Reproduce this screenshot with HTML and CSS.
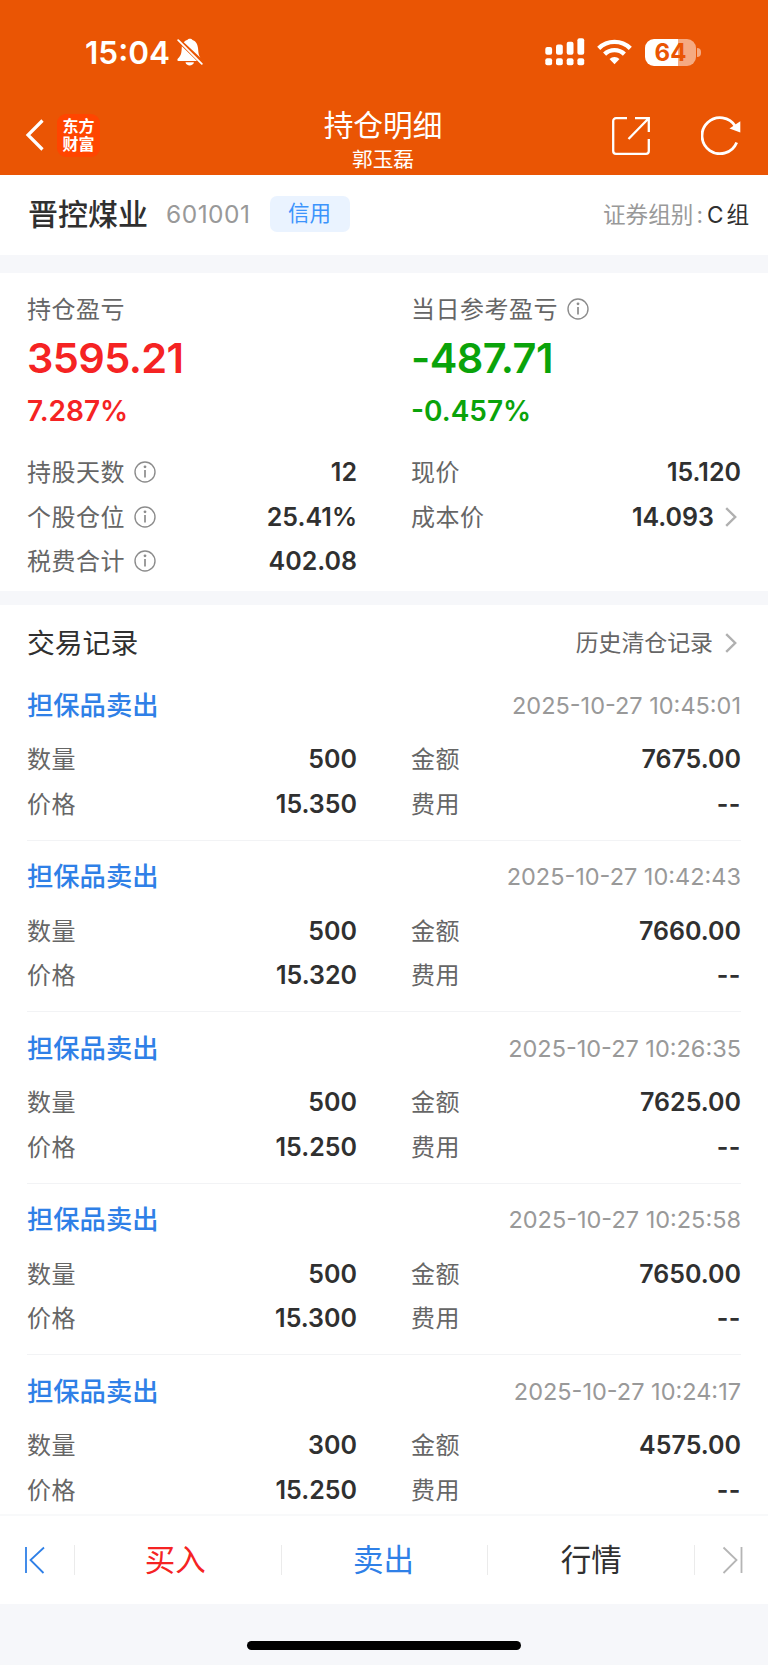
FILE: index.html
```html
<!DOCTYPE html>
<html lang="zh-CN">
<head>
  <meta charset="utf-8">
  <title>持仓明细</title>
  <link rel="stylesheet" href="styles.css">
</head>
<body>
<svg class="defs" width="0" height="0">
  <symbol id="info" viewBox="0 0 22 22">
    <circle cx="11" cy="11" r="10" fill="none" stroke="#8c8c8c" stroke-width="1.4"/>
    <path d="M11 9v7.5" stroke="#8c8c8c" stroke-width="1.7"/>
    <circle cx="11" cy="5.8" r="1.4" fill="#8c8c8c"/>
  </symbol>
  <symbol id="arrow" viewBox="0 0 12 20">
    <path d="M1.2 1.2l9 8.8-9 8.8" fill="none" stroke="#b0b0b0" stroke-width="2.4"/>
  </symbol>
</svg>

<header class="header">
  <div class="status-bar">
    <span class="time">15:04</span>
    <svg class="bell" width="26" height="28" viewBox="0 0 26 28" fill="#fff">
      <path d="M6.8 4.2L24 20.300c-2.700-2.900-2.500-6-3-10.300C20.500 5.800 18.500 2.800 15.500 2 14.600.4 11.200.4 10.300 2 9 2.400 7.700 3.100 6.800 4.200z"/>
      <path d="M4.800 8.300L20 22.900H1.500c-1.500 0-1.400-1.900-.3-2.700 3-2.600 3.400-5.500 3.600-11.900z"/>
      <path d="M8.500 24.300h8.400c-.5 4.200-7.900 4.200-8.400 0z"/>
      <path d="M1.200 2.200l23.600 23.600" stroke="#fff" stroke-width="1.800" stroke-linecap="round"/>
    </svg>
    <svg class="signal" width="40" height="28" viewBox="0 0 40 28" fill="#fff">
      <rect x="0.300" y="9" width="6.800" height="7.800" rx="2"/>
      <rect x="11" y="6.500" width="6.800" height="10.300" rx="2"/>
      <rect x="21.700" y="3.700" width="6.800" height="13.100" rx="2"/>
      <rect x="32.400" y="0.300" width="6.800" height="16.500" rx="2"/>
      <rect x="0.300" y="20.300" width="6.800" height="7" rx="2"/>
      <rect x="11" y="20.300" width="6.800" height="7" rx="2"/>
      <rect x="21.700" y="20.300" width="6.800" height="7" rx="2"/>
      <rect x="32.400" y="20.300" width="6.800" height="7" rx="2"/>
    </svg>
    <svg class="wifi" width="35" height="26" viewBox="0 0 35 26" fill="none" stroke="#fff" stroke-width="4.400">
      <path d="M1.700 9.300a22.700 22.700 0 0 1 31.600 0"/>
      <path d="M7.600 15.100a14.300 14.300 0 0 1 19.800 0"/>
      <path d="M17.500 25.300l-5-5.200a7.300 7.300 0 0 1 10 0z" fill="#fff" stroke="none"/>
    </svg>
    <span class="battery">64</span><i class="battery-cap"></i>
  </div>
  <nav class="nav">
    <div class="nav-left">
      <svg width="19" height="32" viewBox="0 0 19 32"><path d="M17.500 1.500L3 16l14.500 14.500" fill="none" stroke="#fff" stroke-width="3.200"/></svg>
      <span class="logo">东方<br>财富</span>
    </div>
    <div class="nav-title">
      <h1>持仓明细</h1>
      <p>郭玉磊</p>
    </div>
    <div class="nav-right">
      <svg width="38" height="38" viewBox="0 0 38 38" fill="none" stroke="#fff" stroke-width="2.300">
        <path d="M15 1.200H4a2.800 2.800 0 0 0-2.800 2.800v30A2.800 2.800 0 0 0 4 36.800h30a2.800 2.800 0 0 0 2.800-2.800V22"/>
        <path d="M23 1.200h13.800V15M36.500 1.500L16.500 22"/>
      </svg>
      <svg width="40" height="39" viewBox="0 0 40 39">
        <path d="M35.700 26.500A18 18 0 1 1 34.500 10.500" fill="none" stroke="#fff" stroke-width="2.800"/>
        <path d="M39.300 5.300v11.200l-10.800-4z" fill="#fff"/>
      </svg>
    </div>
  </nav>
</header>

<section class="stock">
  <span class="stock-name">晋控煤业</span>
  <span class="stock-code">601001</span>
  <span class="tag">信用</span>
  <span class="group">证券组别<i>:</i><b>C</b><b>组</b></span>
</section>

<section class="summary">
  <div class="col">
    <div class="label"><span>持仓盈亏</span></div>
    <div class="big red">3595.21</div>
    <div class="percent red">7.287%</div>
    <div class="row"><span>持股天数</span><svg class="info"><use href="#info"/></svg><b>12</b></div>
    <div class="row"><span>个股仓位</span><svg class="info"><use href="#info"/></svg><b>25.41%</b></div>
    <div class="row"><span>税费合计</span><svg class="info"><use href="#info"/></svg><b>402.08</b></div>
  </div>
  <div class="col">
    <div class="label"><span>当日参考盈亏</span><svg class="info"><use href="#info"/></svg></div>
    <div class="big green">-487.71</div>
    <div class="percent green">-0.457%</div>
    <div class="row"><span>现价</span><b>15.120</b></div>
    <div class="row"><span>成本价</span><b>14.093</b><svg class="arrow"><use href="#arrow"/></svg></div>
  </div>
</section>

<section class="records">
  <div class="records-head">
    <h2>交易记录</h2>
    <a class="history"><span>历史清仓记录</span><svg class="arrow"><use href="#arrow"/></svg></a>
  </div>

  <div class="record">
    <div class="record-head"><h3>担保品卖出</h3><time>2025-10-27 10:45:01</time></div>
    <div class="record-grid">
      <div class="row"><span>数量</span><b>500</b></div>
      <div class="row"><span>金额</span><b>7675.00</b></div>
      <div class="row"><span>价格</span><b>15.350</b></div>
      <div class="row"><span>费用</span><b class="none">--</b></div>
    </div>
  </div>

  <div class="record">
    <div class="record-head"><h3>担保品卖出</h3><time>2025-10-27 10:42:43</time></div>
    <div class="record-grid">
      <div class="row"><span>数量</span><b>500</b></div>
      <div class="row"><span>金额</span><b>7660.00</b></div>
      <div class="row"><span>价格</span><b>15.320</b></div>
      <div class="row"><span>费用</span><b class="none">--</b></div>
    </div>
  </div>

  <div class="record">
    <div class="record-head"><h3>担保品卖出</h3><time>2025-10-27 10:26:35</time></div>
    <div class="record-grid">
      <div class="row"><span>数量</span><b>500</b></div>
      <div class="row"><span>金额</span><b>7625.00</b></div>
      <div class="row"><span>价格</span><b>15.250</b></div>
      <div class="row"><span>费用</span><b class="none">--</b></div>
    </div>
  </div>

  <div class="record">
    <div class="record-head"><h3>担保品卖出</h3><time>2025-10-27 10:25:58</time></div>
    <div class="record-grid">
      <div class="row"><span>数量</span><b>500</b></div>
      <div class="row"><span>金额</span><b>7650.00</b></div>
      <div class="row"><span>价格</span><b>15.300</b></div>
      <div class="row"><span>费用</span><b class="none">--</b></div>
    </div>
  </div>

  <div class="record">
    <div class="record-head"><h3>担保品卖出</h3><time>2025-10-27 10:24:17</time></div>
    <div class="record-grid">
      <div class="row"><span>数量</span><b>300</b></div>
      <div class="row"><span>金额</span><b>4575.00</b></div>
      <div class="row"><span>价格</span><b>15.250</b></div>
      <div class="row"><span>费用</span><b class="none">--</b></div>
    </div>
  </div>
</section>

<footer class="tabs">
  <a class="tab-edge first"><svg width="21" height="28" viewBox="0 0 21 28" fill="none" stroke="#2f80e7" stroke-width="1.800"><path d="M2 1v26M20 1.500L6.500 14l13 13"/></svg></a>
  <a class="tab buy"><span>买入</span></a>
  <a class="tab sell"><span>卖出</span></a>
  <a class="tab"><span>行情</span></a>
  <a class="tab-edge last"><svg width="21" height="28" viewBox="0 0 21 28" fill="none" stroke="#b5b5b5" stroke-width="1.800"><path d="M19.500 1v26M1.500 1.500L14.500 14l-13 13"/></svg></a>
</footer>
<div class="home-area"><div class="home-bar"></div></div>
</body>
</html>
```
FILE: styles.css
```css
* {
  box-sizing: border-box;
}
body {
  margin: 0;
  width: 768px;
  height: 1665px;
  overflow: hidden;
  display: flex;
  flex-direction: column;
  background-color: #f6f7fa;
  color: #303030;
  font-family: Inter, "Noto Sans CJK SC", sans-serif;
}
h1, h2, h3, p {
  margin: 0;
}
svg {
  display: block;
  flex: none;
}
.defs {
  position: absolute;
}

/* header */
.header {
  height: 174.5px;
  flex: none;
  background-color: #ea5504;
  color: #fff;
}
.status-bar {
  display: flex;
  align-items: center;
  height: 104px;
  padding-left: 85px;
}
.time {
  width: 92px;
  padding-top: 2px;
  font-size: 31.5px;
  font-weight: 600;
  line-height: 40px;
}
.signal {
  margin-left: 342px;
}
.wifi {
  margin-left: 12px;
}
.battery {
  width: 51px;
  height: 27px;
  margin-left: 13px;
  border-radius: 9px;
  background: linear-gradient(90deg, #fff 64%, #f5aa82 64%);
  color: #ea5504;
  font-size: 24px;
  font-weight: 700;
  line-height: 28px;
  text-align: center;
}
.battery-cap {
  width: 4px;
  height: 9px;
  margin-left: 1px;
  border-radius: 0 4px 4px 0;
  background-color: #f5aa82;
}
.nav {
  display: grid;
  grid-template-columns: 1fr auto 1fr;
  height: 70px;
}
.nav-left {
  display: flex;
  align-items: center;
  height: 62px;
  padding-left: 25px;
}
.logo {
  width: 43px;
  height: 43px;
  margin-left: 13px;
  padding-top: 3px;
  border-radius: 9px;
  background-color: #ff4500;
  font-size: 16px;
  font-weight: 700;
  line-height: 18px;
  text-align: center;
}
.nav-title {
  padding-right: 2px;
  text-align: center;
}
.nav-title h1 {
  font-size: 29.7px;
  font-weight: 400;
  line-height: 43px;
}
.nav-title p {
  font-size: 20.7px;
  line-height: 25px;
}
.nav-right {
  display: flex;
  align-items: center;
  justify-content: flex-end;
  gap: 51px;
  height: 63px;
  padding-right: 27px;
}

/* stock line */
.stock {
  display: flex;
  align-items: center;
  height: 80.5px;
  flex: none;
  padding: 0 19px 2px 28px;
  background-color: #fff;
}
.stock-name {
  padding-bottom: 4px;
  font-size: 30px;
  font-weight: 500;
}
.stock-code {
  margin-left: 18px;
  color: #999;
  font-size: 24.5px;
  letter-spacing: 0.5px;
}
.tag {
  width: 80px;
  height: 36px;
  margin-left: 19px;
  border-radius: 7px;
  background-color: #eaf3ff;
  color: #3c94fc;
  font-size: 21.5px;
  line-height: 35px;
  text-align: center;
}
.group {
  display: flex;
  align-items: baseline;
  margin-left: auto;
  padding-bottom: 1px;
  color: #999;
  font-size: 22.6px;
}
.group i {
  margin: 0 4px 0 3px;
  font-style: normal;
}
.group b {
  color: #303030;
  font-weight: 400;
}
.group b + b {
  margin-left: 3px;
}

/* profit summary */
.summary {
  display: grid;
  grid-template-columns: 330px 330px;
  column-gap: 54px;
  align-content: start;
  height: 318px;
  flex: none;
  margin-top: 18px;
  padding: 14px 27px 0;
  background-color: #fff;
}
.label {
  display: flex;
  align-items: center;
  height: 44px;
  color: #666;
  font-size: 24px;
  letter-spacing: 0.5px;
}
.label span, .row span {
  padding-bottom: 3px;
}
.info {
  width: 22px;
  height: 22px;
  margin-left: 9px;
}
.arrow {
  width: 12px;
  height: 20px;
  margin: 0 4px 0 11px;
}
.big {
  height: 54px;
  font-size: 41.5px;
  font-weight: 600;
  line-height: 54px;
  letter-spacing: -0.6px;
}
.percent {
  height: 50px;
  margin-bottom: 15px;
  font-size: 28px;
  font-weight: 600;
  line-height: 52px;
}
.red {
  color: #f52323;
}
.green {
  color: #0aa30a;
}
.row {
  display: flex;
  align-items: center;
  height: 44.6px;
  color: #666;
  font-size: 24px;
  letter-spacing: 0.5px;
}
.row b {
  margin-left: auto;
  color: #303030;
  font-size: 25px;
  font-weight: 600;
  letter-spacing: 0;
}
.row .none {
  letter-spacing: 0.5px;
}

/* trade records */
.records {
  height: 909px;
  flex: none;
  overflow: hidden;
  margin-top: 14px;
  padding: 11px 27px 0;
  background-color: #fff;
}
.records-head {
  display: flex;
  align-items: center;
  justify-content: space-between;
  height: 53px;
}
.records-head h2 {
  padding-bottom: 3px;
  font-size: 27.8px;
  font-weight: 400;
}
.history {
  display: flex;
  align-items: center;
  color: #666;
  font-size: 22.9px;
}
.history span {
  padding: 0 1px 3px 0;
}
.record {
  height: 171.5px;
  border-bottom: 1px solid #f2f3f5;
}
.record-head {
  display: flex;
  align-items: center;
  justify-content: space-between;
  height: 68px;
  padding-top: 4px;
}
.record-head h3 {
  padding-bottom: 4px;
  color: #2f80e7;
  font-size: 26.3px;
  font-weight: 500;
}
.record-head time {
  color: #999;
  font-size: 23.5px;
}
.record-grid {
  display: grid;
  grid-template-columns: 330px 330px;
  column-gap: 54px;
}

/* bottom bar */
.tabs {
  display: flex;
  align-items: center;
  height: 90px;
  flex: none;
  border-top: 2px solid #f8f9fa;
  background-color: #fff;
}
.tab, .tab-edge {
  display: flex;
  align-items: center;
  height: 30px;
}
.tab {
  flex: 1;
  justify-content: center;
  border-left: 1px solid #ebebeb;
  font-size: 30.5px;
}
.tab span {
  padding-bottom: 4px;
}
.buy span {
  padding-right: 5px;
}
.sell span {
  padding-right: 2px;
}
.tab-edge {
  width: 74px;
}
.first {
  padding-left: 24px;
}
.last {
  padding-left: 27px;
  border-left: 1px solid #ebebeb;
}
.buy {
  color: #f52323;
}
.sell {
  color: #2f80e7;
}
.home-area {
  flex: 1;
  padding-top: 37px;
}
.home-bar {
  width: 274px;
  height: 9px;
  margin: 0 auto;
  border-radius: 5px;
  background-color: #000;
}
```
